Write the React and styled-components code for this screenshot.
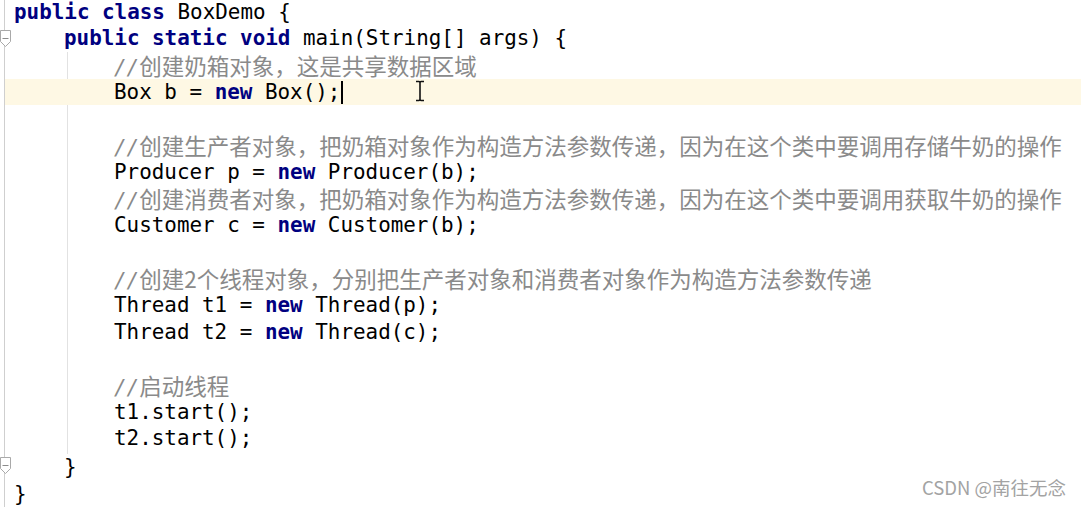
import React from 'react'
import styled, { createGlobalStyle } from 'styled-components'

const GlobalStyle = createGlobalStyle`
  html, body {
    margin: 0;
    padding: 0;
    background: #ffffff;
    overflow: hidden;
  }
`

const Editor = styled.div`
  position: relative;
  display: flex;
  width: 1081px;
  height: 507px;
  background: #ffffff;
  overflow: hidden;
`

const Gutter = styled.div`
  position: relative;
  width: 5px;
  flex-shrink: 0;
  box-sizing: border-box;
  border-left: 3px solid #ffffff;
  border-right: 1px solid #cfcfcf;
  z-index: 1;
`

const FoldMark = styled.svg`
  position: absolute;
  left: -3px;
  top: ${(p) => p.top}px;
`

const Code = styled.div`
  flex: 1;
  margin-top: -1.3px;
  font-family: 'DejaVu Sans Mono', 'Liberation Mono', monospace;
  font-size: 20.9px;
  line-height: 26.667px;
  color: #000000;
`

const Line = styled.div`
  height: 26.667px;
  padding-left: ${(p) => 9 + (p.indent || 0) * 12.5}px;
  white-space: pre;
  background: ${(p) => (p.current ? '#fef8e4' : 'transparent')};
  position: relative;
`

const Body = styled.div`
  margin-left: 62px;
  border-left: 1px solid #e2e2e2;
  padding-bottom: 2px;
`

const BodyLine = styled(Line)`
  margin-left: -63px;
  padding-left: 109px;
`

const Kw = styled.span`
  color: #000080;
  font-weight: bold;
`

const Comment = styled.span`
  color: #8a8a8a;
  font-style: italic;
`

const Cjk = styled.span`
  font-family: 'Noto Sans CJK SC', sans-serif;
  font-style: normal;
  font-size: 22.5px;
`

const Caret = styled.span`
  display: inline-block;
  width: 2px;
  height: 23px;
  background: #000000;
  vertical-align: -5px;
  margin-left: 1px;
`

const IBeam = styled.svg`
  position: absolute;
  left: 413px;
  top: 80px;
`

const Watermark = styled.div`
  position: absolute;
  right: 15px;
  bottom: 7px;
  font-family: 'Noto Sans CJK SC', 'Noto Sans', sans-serif;
  font-size: 18.5px;
  color: #a3a3a3;
  text-shadow: 0 0 1px rgba(255, 255, 255, 0.8);
`

const Fold = ({ top }) => (
  <FoldMark top={top} width="12" height="18" viewBox="0 0 12 18">
    <path d="M0.5 0.5 H10.5 V11.5 L5.5 16.5 L0.5 11.5 Z" fill="#ffffff" stroke="#a9a9a9" />
    <path d="M2.5 8.5 H8.5" stroke="#8c8c8c" />
  </FoldMark>
)

const Remark = ({ text }) => (
  <Comment>
    //<Cjk>{text}</Cjk>
  </Comment>
)

const App = () => (
  <>
    <GlobalStyle />
    <Editor>
      <Gutter>
        <Fold top={30} />
        <Fold top={457} />
      </Gutter>
      <Code>
        <Line>
          <Kw>public class</Kw> BoxDemo {'{'}
        </Line>
        <Line indent={4}>
          <Kw>public static void</Kw> main(String[] args) {'{'}
        </Line>
        <Body>
          <BodyLine>
            <Remark text="创建奶箱对象，这是共享数据区域" />
          </BodyLine>
          <BodyLine current>
            Box b = <Kw>new</Kw> Box();
            <Caret />
          </BodyLine>
          <BodyLine />
          <BodyLine>
            <Remark text="创建生产者对象，把奶箱对象作为构造方法参数传递，因为在这个类中要调用存储牛奶的操作" />
          </BodyLine>
          <BodyLine>
            Producer p = <Kw>new</Kw> Producer(b);
          </BodyLine>
          <BodyLine>
            <Remark text="创建消费者对象，把奶箱对象作为构造方法参数传递，因为在这个类中要调用获取牛奶的操作" />
          </BodyLine>
          <BodyLine>
            Customer c = <Kw>new</Kw> Customer(b);
          </BodyLine>
          <BodyLine />
          <BodyLine>
            <Remark text="创建2个线程对象，分别把生产者对象和消费者对象作为构造方法参数传递" />
          </BodyLine>
          <BodyLine>
            Thread t1 = <Kw>new</Kw> Thread(p);
          </BodyLine>
          <BodyLine>
            Thread t2 = <Kw>new</Kw> Thread(c);
          </BodyLine>
          <BodyLine />
          <BodyLine>
            <Remark text="启动线程" />
          </BodyLine>
          <BodyLine>t1.start();</BodyLine>
          <BodyLine>t2.start();</BodyLine>
        </Body>
        <Line indent={4}>{'}'}</Line>
        <Line>{'}'}</Line>
      </Code>
      <IBeam width="14" height="22" viewBox="0 0 14 22">
        <path
          d="M3 1.5 H6 Q7 1.5 7 3 V19 Q7 20.5 6 20.5 H3 M11 1.5 H8 Q7 1.5 7 3 M7 19 Q7 20.5 8 20.5 H11"
          fill="none"
          stroke="#111111"
          strokeWidth="1.6"
        />
      </IBeam>
      <Watermark>CSDN @南往无念</Watermark>
    </Editor>
  </>
)

export default App
